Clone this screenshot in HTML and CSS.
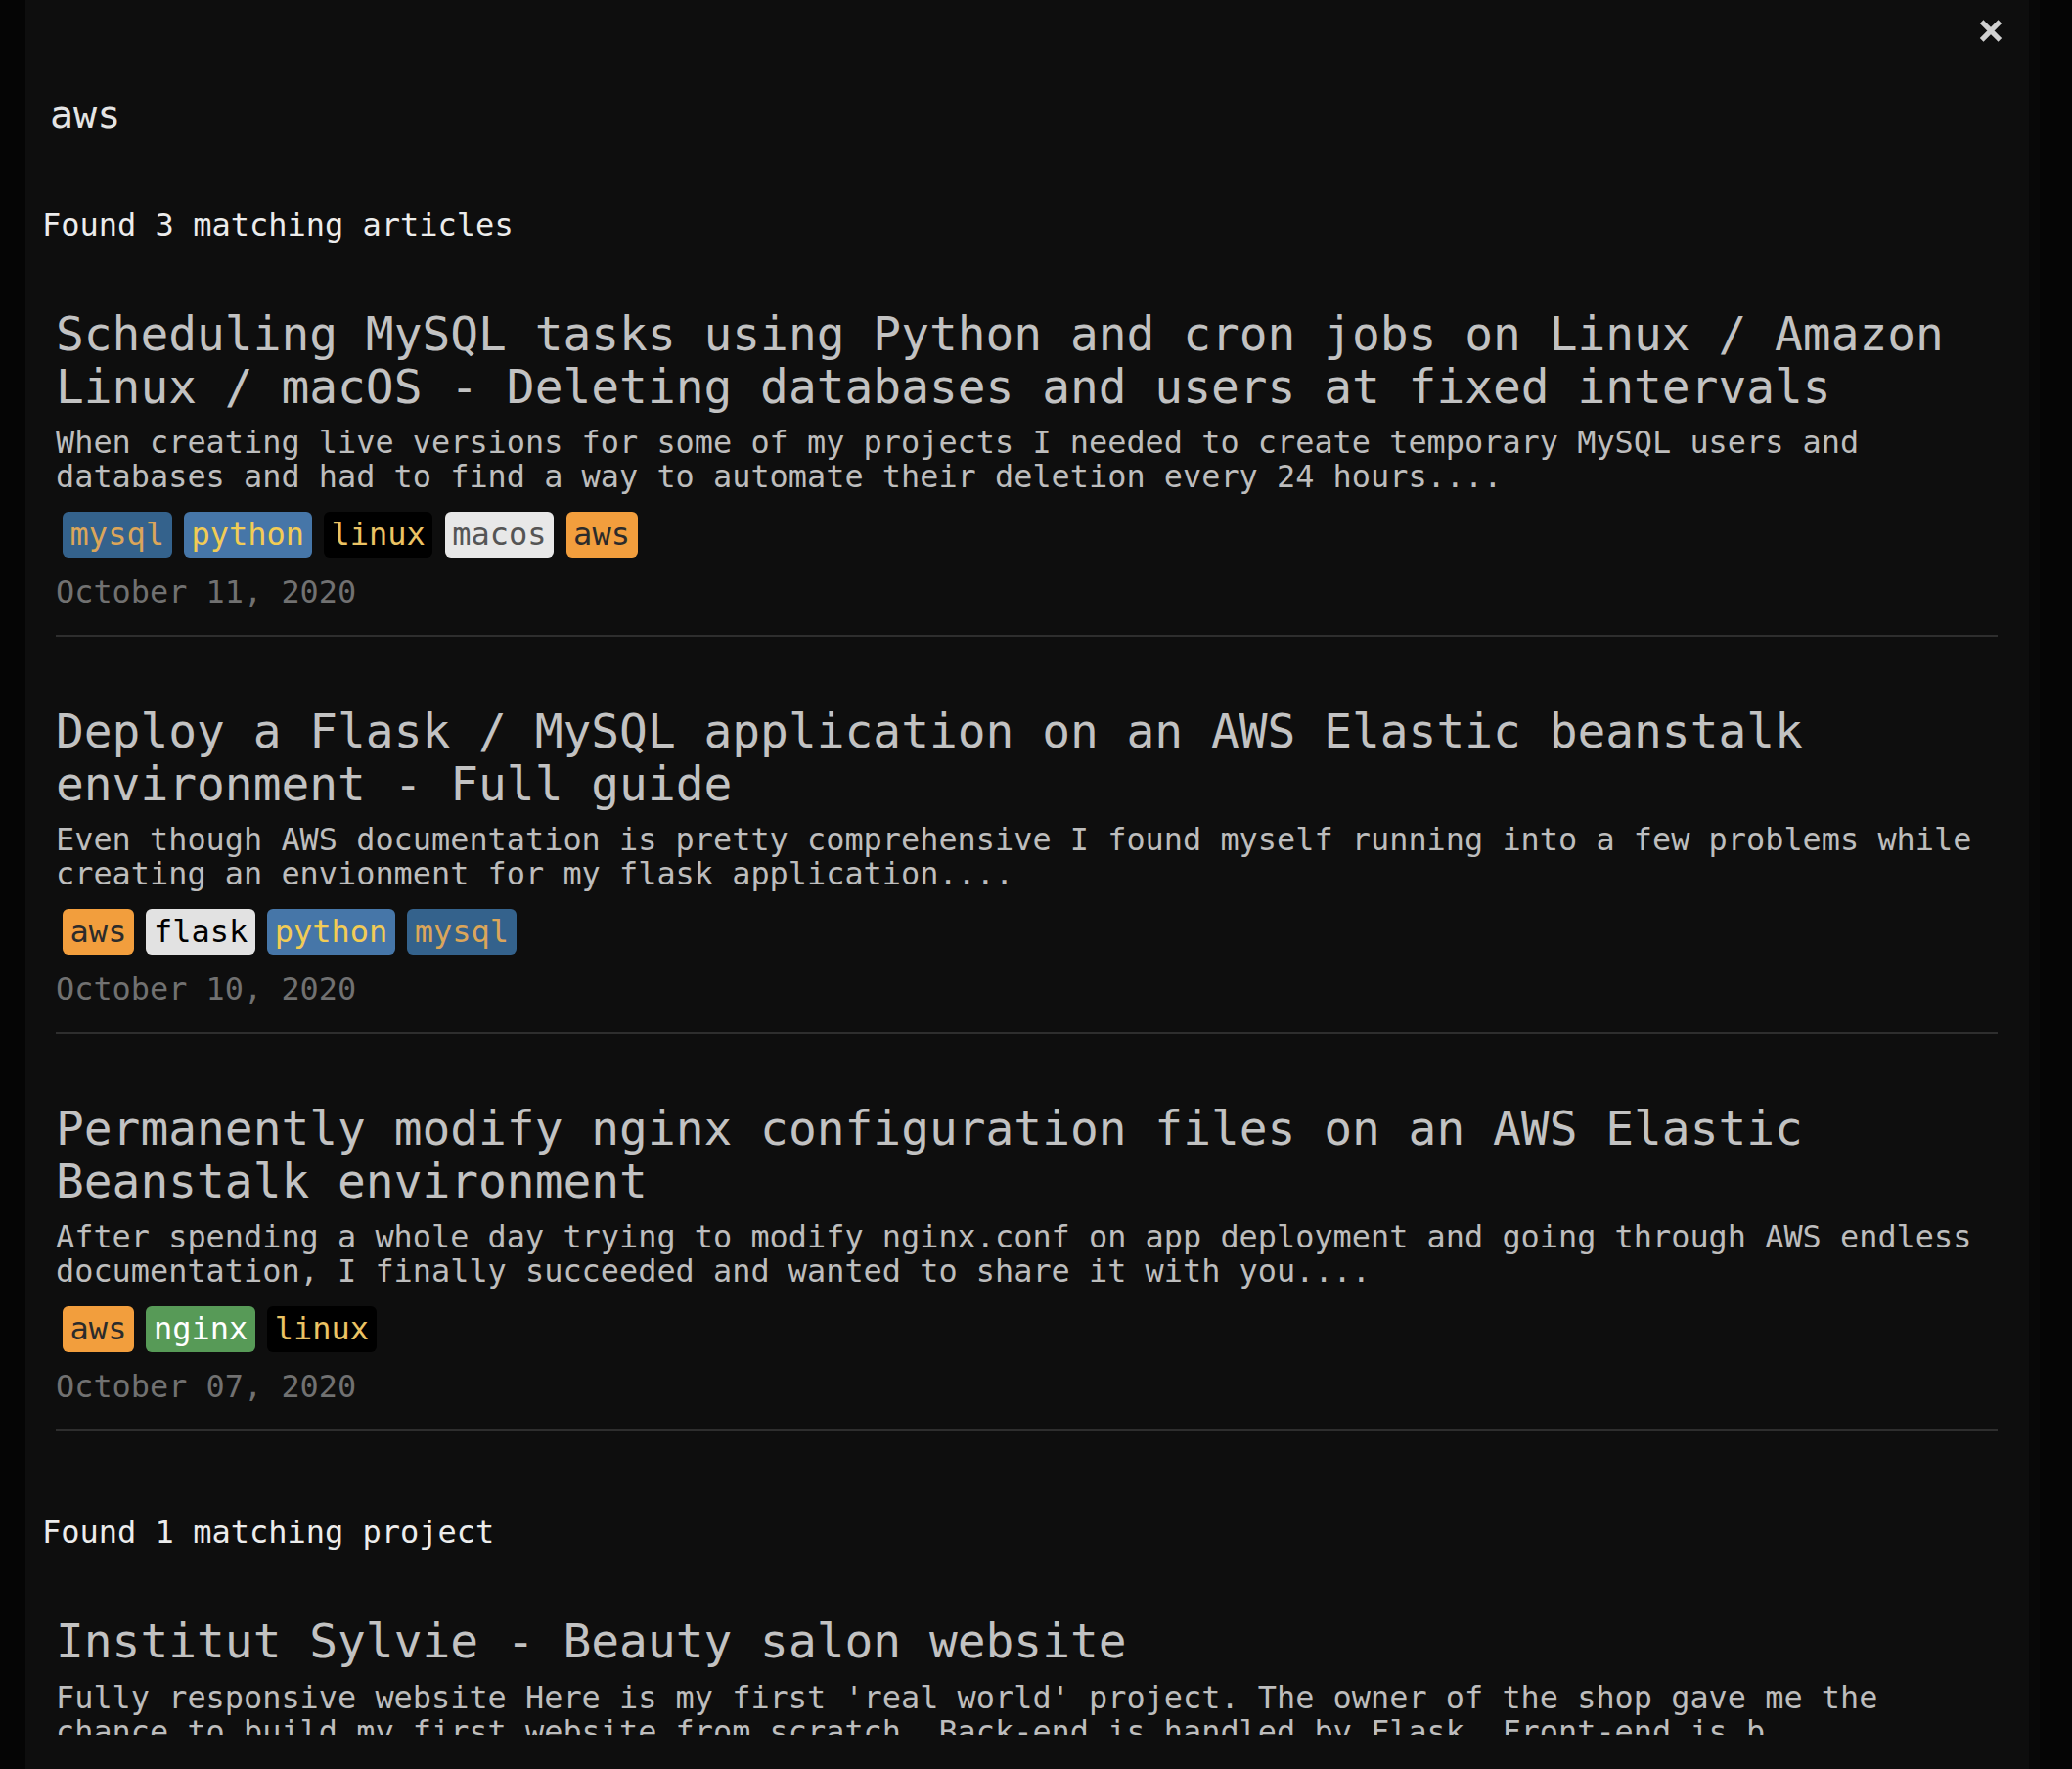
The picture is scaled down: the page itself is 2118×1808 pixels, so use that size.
FILE: index.html
```html
<!DOCTYPE html>
<html lang="en">
<head>
<meta charset="utf-8">
<title>Search</title>
<link rel="stylesheet" href="styles.css">
</head>
<body>
<div class="modal">
  <button class="close" aria-label="Close">
    <svg width="24" height="23" viewBox="0 0 24 23"><path d="M4.5 4 L19.5 19 M19.5 4 L4.5 19" stroke="#d0d0d0" stroke-width="5.2" stroke-linecap="square" fill="none"/></svg>
  </button>
  <div class="content">
    <div class="search">aws</div>
    <p class="found">Found 3 matching articles</p>
    <ul class="results">
      <li class="result">
        <h2 class="title">Scheduling MySQL tasks using Python and cron jobs on Linux / Amazon Linux / macOS - Deleting databases and users at fixed intervals</h2>
        <p class="desc">When creating live versions for some of my projects I needed to create temporary MySQL users and databases and had to find a way to automate their deletion every 24 hours....</p>
        <div class="tags">
          <span class="tag tag-mysql">mysql</span>
          <span class="tag tag-python">python</span>
          <span class="tag tag-linux">linux</span>
          <span class="tag tag-macos">macos</span>
          <span class="tag tag-aws">aws</span>
        </div>
        <div class="date">October 11, 2020</div>
      </li>
      <li class="result">
        <h2 class="title">Deploy a Flask / MySQL application on an AWS Elastic beanstalk environment - Full guide</h2>
        <p class="desc">Even though AWS documentation is pretty comprehensive I found myself running into a few problems while creating an envionment for my flask application....</p>
        <div class="tags">
          <span class="tag tag-aws">aws</span>
          <span class="tag tag-flask">flask</span>
          <span class="tag tag-python">python</span>
          <span class="tag tag-mysql">mysql</span>
        </div>
        <div class="date">October 10, 2020</div>
      </li>
      <li class="result">
        <h2 class="title">Permanently modify nginx configuration files on an AWS Elastic Beanstalk environment</h2>
        <p class="desc">After spending a whole day trying to modify nginx.conf on app deployment and going through AWS endless documentation, I finally succeeded and wanted to share it with you....</p>
        <div class="tags">
          <span class="tag tag-aws">aws</span>
          <span class="tag tag-nginx">nginx</span>
          <span class="tag tag-linux">linux</span>
        </div>
        <div class="date">October 07, 2020</div>
      </li>
    </ul>
    <p class="found found-projects">Found 1 matching project</p>
    <ul class="results">
      <li class="result result-project">
        <h2 class="title">Institut Sylvie - Beauty salon website</h2>
        <p class="desc desc-project">Fully responsive website Here is my first 'real world' project. The owner of the shop gave me the chance to build my first website from scratch. Back-end is handled by Flask. Front-end is b....</p>
      </li>
    </ul>
  </div>
</div>
</body>
</html>
```

FILE: styles.css
```css
* {
  box-sizing: border-box;
}

html,
body {
  margin: 0;
  padding: 0;
}

body {
  width: 2118px;
  height: 1808px;
  overflow: hidden;
  background: #050505;
  font-family: "DejaVu Sans Mono", "Liberation Mono", monospace;
}

.modal {
  position: relative;
  margin-left: 26px;
  width: 2048px;
  height: 1808px;
  background: #0e0e0e;
  box-shadow: 11px 0 0 #080808;
}

.close {
  position: absolute;
  top: 20px;
  right: 27px;
  width: 24px;
  height: 23px;
  padding: 0;
  border: 0;
  background: none;
  cursor: pointer;
}

.close svg {
  display: block;
}

.content {
  height: 1773px;
  overflow: hidden;
}

.search {
  padding: 94px 0 0 25px;
  font-size: 40px;
  line-height: 46px;
  color: #e4e4e4;
}

.found {
  margin: 73px 0 0 17px;
  font-size: 32px;
  line-height: 35px;
  color: #ececec;
}

.found-projects {
  margin-top: 86px;
}

.results {
  list-style: none;
  margin: 67px 32px 0 31px;
  padding: 0;
}

.result {
  padding-bottom: 26px;
  border-bottom: 2px solid #2e2e2e;
}

.result + .result {
  margin-top: 70px;
}

.result-project {
  border-bottom: 0;
}

.title {
  margin: 0;
  font-size: 47.85px;
  line-height: 54px;
  font-weight: normal;
  color: #c2c2c2;
}

.desc {
  margin: 12px 0 0;
  font-size: 31.9px;
  line-height: 35px;
  color: #bdbdbd;
}

.desc-project {
  margin-top: 13px;
}

.tags {
  display: flex;
  gap: 12.3px;
  margin-top: 18px;
  padding-left: 7px;
}

.tag {
  font-size: 32px;
  line-height: 47px;
  padding: 0 7.6px;
  border-radius: 6px;
}

.tag-mysql {
  background: #34628c;
  color: #dba65a;
}

.tag-python {
  background: #4676a8;
  color: #f2cc55;
}

.tag-linux {
  background: #000000;
  color: #ebc364;
}

.tag-macos {
  background: #e8e8e8;
  color: #555555;
}

.tag-aws {
  background: #f29e3d;
  color: #2b2b2b;
}

.tag-flask {
  background: #e2e2e2;
  color: #000000;
}

.tag-nginx {
  background: #579a57;
  color: #ffffff;
}

.date {
  margin-top: 18px;
  font-size: 31.9px;
  line-height: 35px;
  color: #717171;
}
```
